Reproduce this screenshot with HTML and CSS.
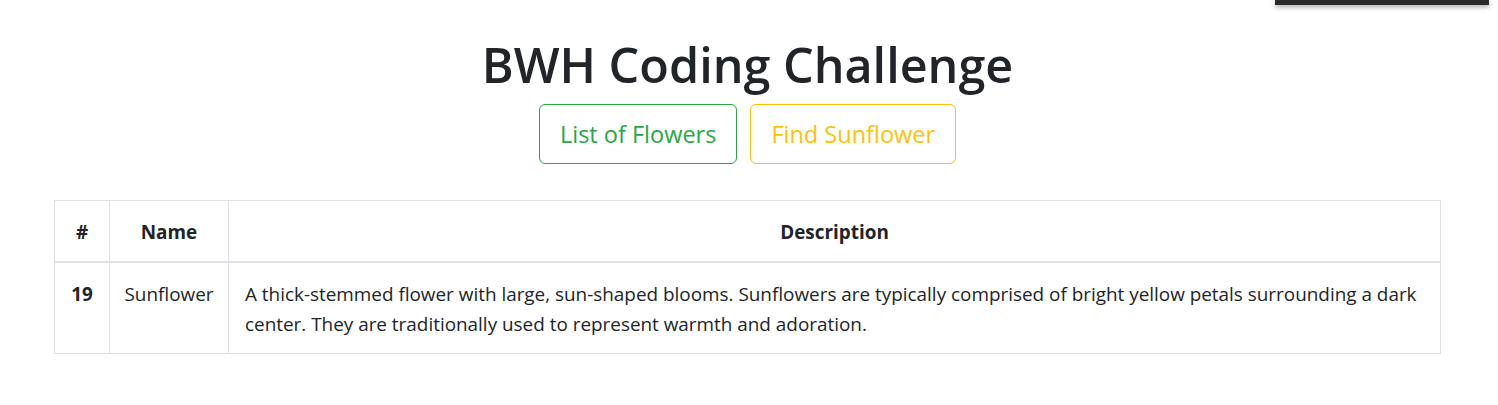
FILE: index.html
```html
<!DOCTYPE html>
<html lang="en">
<head>
<meta charset="utf-8">
<title>BWH Coding Challenge</title>
<link rel="stylesheet" href="styles.css">
</head>
<body>
<div class="overlay-bar"></div>
<main class="page">
  <h1 class="title">BWH Coding Challenge</h1>
  <div class="actions">
    <button class="btn btn-green">List of Flowers</button>
    <button class="btn btn-yellow">Find Sunflower</button>
  </div>
  <table class="flowers">
    <colgroup>
      <col class="col-id">
      <col class="col-name">
      <col class="col-desc">
    </colgroup>
    <thead>
      <tr>
        <th>#</th>
        <th>Name</th>
        <th>Description</th>
      </tr>
    </thead>
    <tbody>
      <tr>
        <th>19</th>
        <td>Sunflower</td>
        <td class="desc">A thick-stemmed flower with large, sun-shaped blooms. Sunflowers are typically comprised of bright yellow petals surrounding a dark center. They are traditionally used to represent warmth and adoration.</td>
      </tr>
    </tbody>
  </table>
</main>
</body>
</html>
```

FILE: styles.css
```css
* { box-sizing: border-box; }
html, body { margin: 0; padding: 0; background: #fff; }
body {
  font-family: "Open Sans", "Noto Sans", sans-serif;
  color: #212529;
  font-size: 19px;
  line-height: 1.5;
  position: relative;
  height: 405px;
  overflow: hidden;
}
.overlay-bar {
  position: absolute;
  top: 0;
  left: 1275px;
  width: 214px;
  height: 5px;
  background: #2b2b2e;
  box-shadow: 0 2px 5px rgba(0,0,0,0.35);
}
.page {
  padding: 34px 57px 0 54px;
  display: flex;
  flex-direction: column;
  align-items: center;
}
.title {
  margin: 0 0 10px;
  font-size: 48.5px;
  font-weight: 600;
  line-height: 60px;
  text-align: center;
}
.actions {
  display: flex;
  gap: 13px;
  justify-content: center;
}
.btn {
  font-family: inherit;
  font-size: 23.5px;
  line-height: 37px;
  padding: 11px 20px 10px;
  border-radius: 6px;
  background: #fff;
  border: 1px solid;
  cursor: pointer;
}
.btn-green { color: #28a745; border-color: #28a745; }
.btn-yellow { color: #ffc107; border-color: #ffc107; }
.flowers {
  margin-top: 36px;
  width: 100%;
  table-layout: fixed;
  border-collapse: collapse;
  color: #212529;
}
.flowers .col-id { width: 55px; }
.flowers .col-name { width: 119px; }
.flowers th, .flowers td {
  border: 1px solid #dee2e6;
  padding: 16px 14px 14px;
  line-height: 30px;
  text-align: center;
  vertical-align: top;
  font-size: 18.9px;
}
.flowers thead th {
  border-bottom-width: 2px;
}
.flowers th { font-weight: 700; }
.flowers td.desc { text-align: left; padding-left: 16px; }
```
